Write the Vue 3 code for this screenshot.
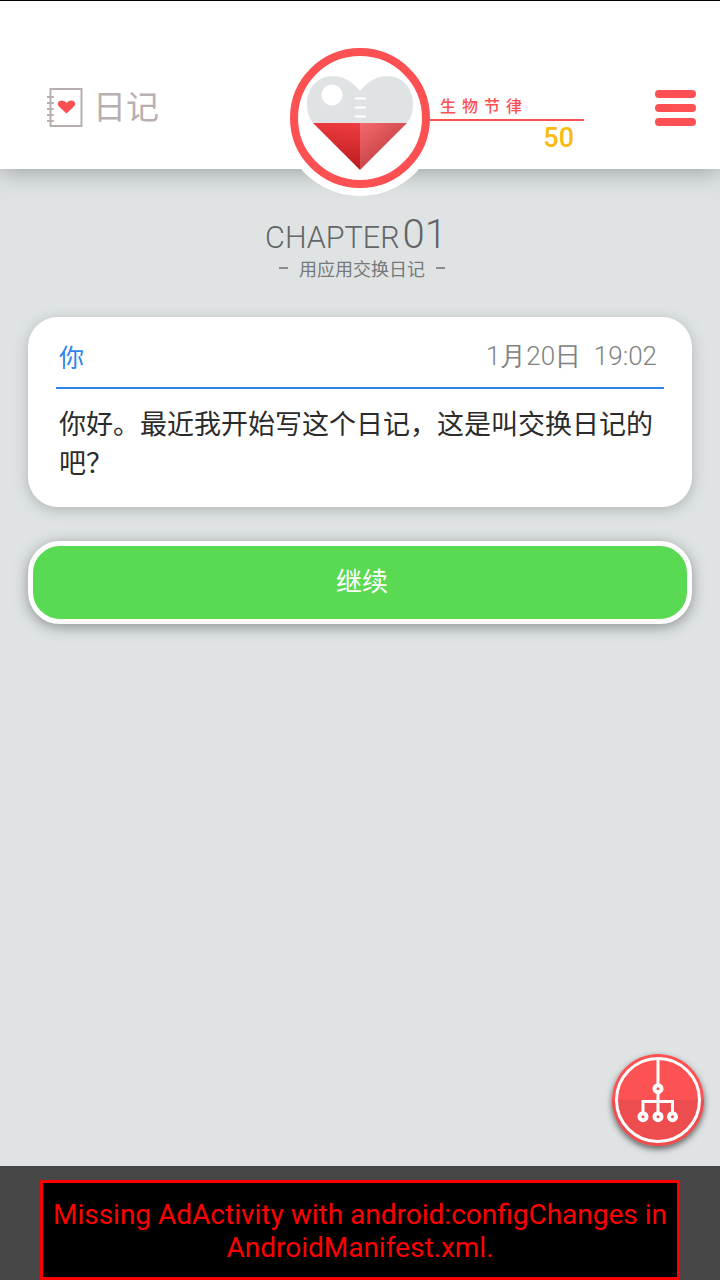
<template>
  <div class="page">
    <header class="top-bar">
      <div class="logo">
        <svg class="logo-icon" width="36" height="40" viewBox="0 0 36 40">
          <rect x="3.5" y="1" width="31" height="37" fill="none" stroke="#b9afaf" stroke-width="2" />
          <path d="M0 9h6M0 15h6M0 21h6M0 27h6M0 33h6" stroke="#b9afaf" stroke-width="2" stroke-linecap="round" />
          <path d="M19.5 25.5 L12 18.5 C9.5 15.5 11.5 12.5 14.5 12.5 C16.5 12.5 18.5 13.5 19.5 15 C20.5 13.5 22.5 12.5 24.5 12.5 C27.5 12.5 29.5 15.5 27 18.5 Z" fill="#fc5053" />
        </svg>
        <span class="logo-text">日记</span>
      </div>
      <div class="bio">
        <div class="bio-label">生物节律</div>
        <div class="bio-value">50</div>
      </div>
      <div class="menu-btn">
        <span></span>
        <span></span>
        <span></span>
      </div>
    </header>

    <div class="heart-badge">
      <svg width="140" height="140" viewBox="0 0 140 140">
        <defs>
          <linearGradient id="heartLeft" x1="0.8" y1="0" x2="0.7" y2="1">
            <stop offset="0" stop-color="#ee3d41" />
            <stop offset="1" stop-color="#b81a1c" />
          </linearGradient>
          <linearGradient id="heartRight" x1="0" y1="0" x2="0.7" y2="0.9">
            <stop offset="0" stop-color="#f66a6c" />
            <stop offset="1" stop-color="#b93a3c" />
          </linearGradient>
        </defs>
        <circle cx="70" cy="70" r="66" fill="#fff" stroke="#fc5053" stroke-width="8" />
        <path d="M70 43 C62 33 52 28 43 28 C28 28 17 40 17 55 C17 64 19 70 23 75 H117 C121 70 123 64 123 55 C123 40 112 28 97 28 C88 28 78 33 70 43 Z" fill="#dfe3e4" />
        <circle cx="42" cy="47" r="10.5" fill="#fff" />
        <path d="M65 50.500h11M65 59.500h11M65 68.500h11" stroke="#fff" stroke-width="2" />
        <path d="M23 75 H70 V122 Z" fill="url(#heartLeft)" />
        <path d="M70 75 H117 L70 122 Z" fill="url(#heartRight)" />
      </svg>
    </div>

    <main class="content">
      <div class="chapter">
        <div class="chapter-title">CHAPTER<span class="chapter-num">01</span></div>
        <div class="chapter-sub">
          <span class="dash"></span>
          <span>用应用交换日记</span>
          <span class="dash"></span>
        </div>
      </div>

      <section class="card">
        <div class="card-head">
          <span class="who">你</span>
          <span class="time">1月20日&nbsp;&nbsp;19:02</span>
        </div>
        <p class="message">你好。最近我开始写这个日记，这是叫交换日记的吧？</p>
      </section>

      <button class="next-btn">继续</button>
    </main>

    <div class="fab">
      <svg width="92" height="92" viewBox="0 0 92 92">
        <circle cx="46" cy="46" r="46" fill="#fc5254" />
        <path d="M0 46 H92 A46 46 0 0 1 0 46 Z" fill="#ee4d50" />
        <circle cx="46" cy="46" r="41.500" fill="none" stroke="#fff" stroke-width="3" />
        <path d="M46 5 V30 M46 40 V62 M31 62 V47.500 H60.500 V62" fill="none" stroke="#fff" stroke-width="3" />
        <circle cx="46" cy="34.700" r="3.500" fill="#fc5254" stroke="#fff" stroke-width="4" />
        <circle cx="31" cy="62.700" r="3.500" fill="#ee4d50" stroke="#fff" stroke-width="4" />
        <circle cx="46" cy="62.700" r="3.500" fill="#ee4d50" stroke="#fff" stroke-width="4" />
        <circle cx="60.500" cy="62.700" r="3.500" fill="#ee4d50" stroke="#fff" stroke-width="4" />
      </svg>
    </div>

    <footer class="ad-bar">
      <div class="ad-box">Missing AdActivity with android:configChanges in AndroidManifest.xml.</div>
    </footer>
  </div>
</template>

<script setup>
</script>

<style>
html,
body {
  margin: 0;
  background: #dfe3e4;
}
</style>

<style scoped>
.page {
  position: relative;
  width: 720px;
  height: 1280px;
  display: flex;
  flex-direction: column;
  overflow: hidden;
  background: #dfe3e4;
  font-family: "Noto Sans CJK SC", "Noto Sans", sans-serif;
}

.top-bar {
  height: 169px;
  flex-shrink: 0;
  box-sizing: border-box;
  display: flex;
  align-items: flex-start;
  padding-left: 47px;
  background: #fff;
  border-top: 1px solid #000;
  box-shadow: 0 3px 22px rgba(90, 95, 95, 0.5);
  position: relative;
}

.logo {
  display: flex;
  align-items: center;
  margin-top: 87px;
}

.logo-icon {
  display: block;
}

.logo-text {
  margin-left: 10px;
  margin-top: -6px;
  font-size: 33px;
  line-height: 40px;
  color: #b9afaf;
}

.bio {
  position: relative;
  z-index: 2;
  width: 154px;
  margin-left: auto;
  margin-top: 96px;
  margin-right: 71px;
}

.bio-label {
  height: 24px;
  box-sizing: border-box;
  padding-left: 10px;
  border-bottom: 2px solid #fc5053;
  font-size: 16px;
  font-weight: 500;
  line-height: 17px;
  letter-spacing: 6px;
  color: #fc5053;
  white-space: nowrap;
}

.bio-value {
  padding-right: 10px;
  text-align: right;
  font-family: Roboto, sans-serif;
  font-size: 27px;
  line-height: 34px;
  font-weight: 500;
  color: #fcb90f;
}

.menu-btn {
  width: 41px;
  margin-top: 89px;
  margin-right: 24px;
  display: flex;
  flex-direction: column;
  gap: 6px;
}

.menu-btn span {
  height: 8px;
  border-radius: 4px;
  background: #fc5053;
}

.heart-badge {
  position: absolute;
  z-index: 1;
  left: 282px;
  top: 40px;
  width: 156px;
  height: 156px;
  border-radius: 50%;
  background: #fff;
  display: flex;
  align-items: center;
  justify-content: center;
}

.content {
  flex: 1;
  padding: 0 28px;
}

.chapter {
  margin-top: 46px;
  display: flex;
  flex-direction: column;
  align-items: center;
}

.chapter-title {
  margin-left: -8px;
  font-family: Roboto, sans-serif;
  font-weight: 300;
  font-size: 30.500px;
  line-height: 40px;
  color: #636566;
}

.chapter-num {
  margin-left: 3px;
  font-size: 40px;
  line-height: 40px;
}

.chapter-sub {
  margin-top: -3px;
  margin-left: 4px;
  display: flex;
  align-items: center;
  gap: 11px;
  font-size: 18px;
  line-height: 26px;
  color: #77797a;
}

.dash {
  width: 9px;
  height: 2px;
  background: #8a8c8d;
}

.card {
  margin-top: 36px;
  height: 190px;
  box-sizing: border-box;
  padding: 0 28px;
  border-radius: 30px;
  background: #fff;
  box-shadow: 0 3px 14px rgba(90, 95, 95, 0.35);
}

.card-head {
  height: 72px;
  box-sizing: border-box;
  padding: 8px 7px 0 3px;
  display: flex;
  align-items: center;
  justify-content: space-between;
  border-bottom: 2px solid #2f86e8;
}

.who {
  font-size: 25px;
  color: #2f86e8;
}

.time {
  font-family: Roboto, sans-serif;
  font-size: 26px;
  font-weight: 300;
  color: #808284;
}

.message {
  margin: 14px 0 0;
  padding-left: 3px;
  font-size: 27px;
  line-height: 39px;
  color: #2b2b2b;
}

.next-btn {
  display: block;
  width: 100%;
  height: 83px;
  margin-top: 34px;
  padding: 0 0 6px 4px;
  border: 5px solid #fff;
  border-radius: 32px;
  background: #5ad952;
  box-shadow: 0 3px 14px rgba(70, 75, 75, 0.55);
  font-family: "Noto Sans CJK SC", sans-serif;
  font-size: 26px;
  color: #fff;
}

.fab {
  position: absolute;
  left: 612px;
  top: 1054px;
  width: 92px;
  height: 92px;
  border-radius: 50%;
  box-shadow: 0 3px 6px rgba(40, 40, 40, 0.7);
}

.fab svg {
  display: block;
}

.ad-bar {
  height: 114px;
  flex-shrink: 0;
  box-sizing: border-box;
  padding: 14px 40px 0;
  background: #464646;
}

.ad-box {
  height: 100px;
  box-sizing: border-box;
  padding: 15px 8px 0;
  border: 3px solid #f00;
  background: #000;
  font-family: Roboto, sans-serif;
  font-size: 28px;
  line-height: 33px;
  color: #f00;
  text-align: center;
}
</style>
